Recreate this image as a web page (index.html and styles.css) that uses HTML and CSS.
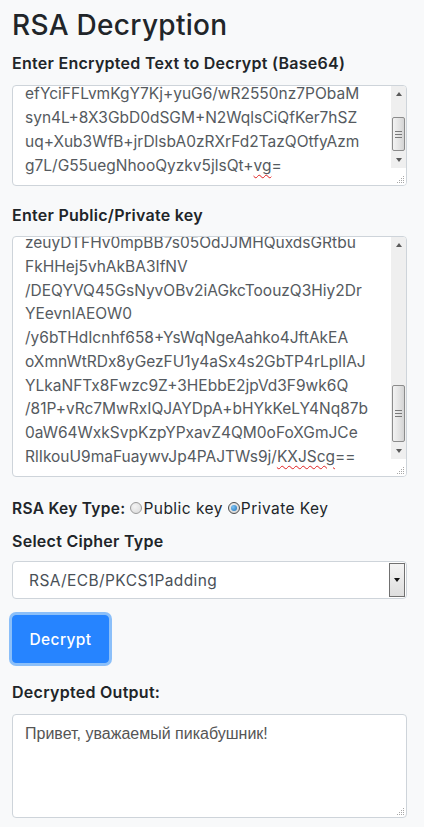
FILE: index.html
```
<!DOCTYPE html>
<html lang="en">
<head>
<meta charset="utf-8">
<title>RSA Decryption</title>
<link rel="stylesheet" href="styles.css">
</head>
<body>
<h1 class="title">RSA Decryption</h1>

<div class="label lbl-enc">Enter Encrypted Text to Decrypt (Base64)</div>
<div class="ta ta-enc">
  <div class="ta-view">
    <div class="ta-lines lines-enc">
      <div class="ln">efYciFFLvmKgY7Kj+yuG6/wR2550nz7PObaM</div>
      <div class="ln">syn4L+8X3GbD0dSGM+N2WqlsCiQfKer7hSZ</div>
      <div class="ln">uq+Xub3WfB+jrDlsbA0zRXrFd2TazQOtfyAzm</div>
      <div class="ln">g7L/G55uegNhooQyzkv5jlsQt+<span class="spell">vg</span>=</div>
    </div>
  </div>
  <div class="side side-enc">
    <div class="sb">
      <div class="sb-btn"><span class="tri-up"></span></div>
      <div class="sb-track"><div class="thumb thumb-enc"><span class="grip"></span></div></div>
      <div class="sb-btn"><span class="tri-down"></span></div>
    </div>
    <div class="corner">
      <svg width="9" height="9" viewBox="0 0 9 9"><g fill="#a8a8a8"><rect x="7" y="1" width="1" height="1"/><rect x="5" y="3" width="1" height="1"/><rect x="7" y="3" width="1" height="1"/><rect x="3" y="5" width="1" height="1"/><rect x="5" y="5" width="1" height="1"/><rect x="7" y="5" width="1" height="1"/><rect x="1" y="7" width="1" height="1"/><rect x="3" y="7" width="1" height="1"/><rect x="5" y="7" width="1" height="1"/><rect x="7" y="7" width="1" height="1"/></g></svg>
    </div>
  </div>
</div>

<div class="label lbl-key">Enter Public/Private key</div>
<div class="ta ta-key">
  <div class="ta-view">
    <div class="ta-lines lines-key">
      <div class="ln">zeuyDTFHv0mpBB7s05OdJJMHQuxdsGRtbu</div>
      <div class="ln">FkHHej5vhAkBA3IfNV</div>
      <div class="ln">/DEQYVQ45GsNyvOBv2iAGkcToouzQ3Hiy2Dr</div>
      <div class="ln">YEevnlAEOW0</div>
      <div class="ln">/y6bTHdIcnhf658+YsWqNgeAahko4JftAkEA</div>
      <div class="ln">oXmnWtRDx8yGezFU1y4aSx4s2GbTP4rLplIAJ</div>
      <div class="ln">YLkaNFTx8Fwzc9Z+3HEbbE2jpVd3F9wk6Q</div>
      <div class="ln">/81P+vRc7MwRxIQJAYDpA+bHYkKeLY4Nq87b</div>
      <div class="ln">0aW64WxkSvpKzpYPxavZ4QM0oFoXGmJCe</div>
      <div class="ln">RlIkouU9maFuaywvJp4PAJTWs9j/<span class="spell">KXJScg</span>==</div>
    </div>
  </div>
  <div class="side side-key">
    <div class="sb">
      <div class="sb-btn"><span class="tri-up"></span></div>
      <div class="sb-track"><div class="thumb thumb-key"><span class="grip"></span></div></div>
      <div class="sb-btn"><span class="tri-down"></span></div>
    </div>
    <div class="corner">
      <svg width="9" height="9" viewBox="0 0 9 9"><g fill="#a8a8a8"><rect x="7" y="1" width="1" height="1"/><rect x="5" y="3" width="1" height="1"/><rect x="7" y="3" width="1" height="1"/><rect x="3" y="5" width="1" height="1"/><rect x="5" y="5" width="1" height="1"/><rect x="7" y="5" width="1" height="1"/><rect x="1" y="7" width="1" height="1"/><rect x="3" y="7" width="1" height="1"/><rect x="5" y="7" width="1" height="1"/><rect x="7" y="7" width="1" height="1"/></g></svg>
    </div>
  </div>
</div>

<div class="keytype">
  <span class="kt-label">RSA Key Type:</span>
  <span class="radio"></span><span class="opt">Public key</span>
  <span class="radio radio-on"><span class="dot"></span></span><span class="opt">Private Key</span>
</div>

<div class="label lbl-cipher">Select Cipher Type</div>
<div class="select">
  <span class="sel-text">RSA/ECB/PKCS1Padding</span>
  <span class="sel-btn"><span class="tri-sel"></span></span>
</div>

<div class="btn-wrap"><button class="btn">Decrypt</button></div>

<div class="label lbl-out">Decrypted Output:</div>
<div class="ta ta-out">
  <div class="out-text">Привет, уважаемый пикабушник!</div>
  <div class="out-corner">
    <svg width="9" height="9" viewBox="0 0 9 9"><g fill="#a8a8a8"><rect x="7" y="1" width="1" height="1"/><rect x="5" y="3" width="1" height="1"/><rect x="7" y="3" width="1" height="1"/><rect x="3" y="5" width="1" height="1"/><rect x="5" y="5" width="1" height="1"/><rect x="7" y="5" width="1" height="1"/><rect x="1" y="7" width="1" height="1"/><rect x="3" y="7" width="1" height="1"/><rect x="5" y="7" width="1" height="1"/><rect x="7" y="7" width="1" height="1"/></g></svg>
  </div>
</div>
</body>
</html>
```
FILE: styles.css
```
* { box-sizing: border-box; }
html { background: #f8f9fa; }
body {
  margin: 0;
  padding: 0 17px 0 12px;
  background: #f8f9fa;
  color: #212529;
  font-family: "Inter", "Noto Sans", sans-serif;
  font-size: 16px;
}
.title {
  margin: 8px 0 0;
  font-size: 28px;
  line-height: 34px;
  font-weight: 500;
  letter-spacing: 0.3px;
}
.label {
  font-weight: 600;
  font-size: 16px;
  line-height: 24px;
  letter-spacing: 0.27px;
  margin-bottom: 10px;
}
.lbl-enc { margin-top: 9px; }
.lbl-key { margin-top: 17px; margin-bottom: 9px; }
.lbl-cipher { margin-top: 9px; margin-bottom: 8px; }
.lbl-out { margin-top: 17px; }

.ta {
  border: 1px solid #ced4da;
  border-radius: 4px;
  background: #fff;
  display: flex;
  overflow: hidden;
}
.ta-enc { height: 101px; }
.ta-key { height: 241px; }
.ta-view {
  flex: 1;
  overflow: hidden;
  padding: 0 12px;
}
.ta-lines { color: #555a60; font-size: 15.5px; letter-spacing: 0; }
.lines-enc { margin-top: -4px; }
.lines-key { margin-top: -6px; }
.ln { height: 24px; line-height: 24px; white-space: nowrap; }
.lines-key .ln { height: 23.75px; line-height: 23.75px; }
.spell {
  text-decoration: underline wavy #e02020;
  text-decoration-thickness: 1px;
  text-underline-offset: 3px;
}

.side { width: 15px; display: flex; flex-direction: column; }
.sb {
  flex: 1;
  display: flex;
  flex-direction: column;
  background: #efefef;
}
.sb-btn {
  height: 16px;
  display: flex;
  align-items: center;
  justify-content: center;
}
.tri-up, .tri-down { width: 0; height: 0; border-left: 3.5px solid transparent; border-right: 3.5px solid transparent; }
.tri-up { border-bottom: 4px solid #5a5a5a; }
.tri-down { border-top: 4px solid #5a5a5a; }
.sb-track { flex: 1; display: flex; flex-direction: column; }
.thumb {
  margin: 0 1px;
  border: 1px solid #8c8c8c;
  border-radius: 2px;
  background: linear-gradient(to right, #f3f3f3, #e2e2e2 60%, #d4d4d4);
  display: flex;
  align-items: center;
  justify-content: center;
}
.thumb-enc { margin-top: 15px; height: 34px; }
.thumb-key { margin-top: 132px; height: 57px; }
.grip {
  width: 7px;
  height: 7px;
  border-top: 1px solid #7a7a7a;
  border-bottom: 1px solid #7a7a7a;
  background: linear-gradient(#7a7a7a, #7a7a7a) center / 7px 1px no-repeat;
}
.corner {
  height: 17px;
  background: #fff;
  display: flex;
  align-items: flex-end;
  justify-content: flex-end;
  padding: 0 1px 1px 0;
}

.keytype {
  margin-top: 19px;
  display: flex;
  align-items: center;
  height: 24px;
  font-size: 15.5px;
}
.kt-label { font-weight: 600; margin-right: 5px; letter-spacing: 0.3px; }
.opt { letter-spacing: 0.45px; }
.radio {
  width: 12px;
  height: 12px;
  border-radius: 50%;
  border: 1px solid #9a9a9a;
  background: radial-gradient(circle at 40% 35%, #f4f4f4, #d8d8d8);
  display: inline-flex;
  align-items: center;
  justify-content: center;
  margin-right: 1px;
}
.radio-on { border-color: #4d4d4d; background: radial-gradient(circle at 40% 35%, #f0f0f0, #cfcfcf); margin-left: 5px; }
.dot {
  width: 6px;
  height: 6px;
  border-radius: 50%;
  background: radial-gradient(circle at 35% 35%, #7fc4f5, #1b6fb5);
}

.select {
  height: 38px;
  border: 1px solid #ced4da;
  border-radius: 4px;
  background: #fff;
  display: flex;
  align-items: center;
  padding: 1px 1px 1px 16px;
}
.sel-text { flex: 1; color: #495057; font-size: 15.5px; letter-spacing: 0.4px; }
.sel-btn {
  width: 16px;
  align-self: stretch;
  border: 1px solid #707070;
  background: linear-gradient(#f4f4f4, #dedede);
  display: flex;
  align-items: center;
  justify-content: center;
}
.tri-sel { width: 0; height: 0; border-left: 3.5px solid transparent; border-right: 3.5px solid transparent; border-top: 4px solid #111; }

.btn-wrap { margin-top: 13px; }
.btn {
  width: 97px;
  height: 48px;
  border: 1px solid #2684ff;
  border-radius: 4px;
  background: #2684ff;
  color: #fff;
  font-family: "Inter", "Noto Sans", sans-serif;
  font-size: 15.5px;
  font-weight: 500;
  letter-spacing: 0.4px;
  box-shadow: 0 0 0 3px #8bbff9;
  margin: 3px 0 0 0;
  padding: 0;
}

.ta-out {
  height: 104px;
  flex-direction: column;
}
.out-text {
  flex: 1;
  padding: 7px 12px 0;
  font-family: "Liberation Sans", Arial, sans-serif;
  font-size: 16px;
  line-height: 24px;
  color: #555;
}
.out-corner {
  display: flex;
  justify-content: flex-end;
  padding: 0 1px 1px 0;
}
```
